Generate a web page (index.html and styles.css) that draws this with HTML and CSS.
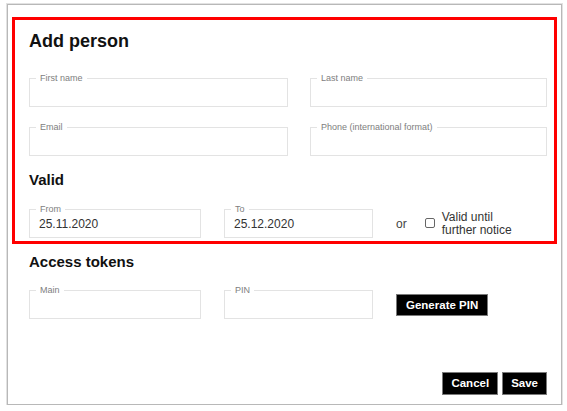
FILE: index.html
```html
<!DOCTYPE html>
<html lang="en">
<head>
<meta charset="utf-8">
<title>Add person</title>
<link rel="stylesheet" href="styles.css">
</head>
<body>
<div class="dialog">
  <section class="person">
    <h1 class="title">Add person</h1>
    <div class="row row-names">
      <fieldset class="field"><legend>First name</legend><div class="value"></div></fieldset>
      <fieldset class="field"><legend>Last name</legend><div class="value"></div></fieldset>
    </div>
    <div class="row row-names">
      <fieldset class="field"><legend>Email</legend><div class="value"></div></fieldset>
      <fieldset class="field"><legend>Phone (international format)</legend><div class="value"></div></fieldset>
    </div>
    <h2 class="subtitle">Valid</h2>
    <div class="row row-dates">
      <fieldset class="field"><legend>From</legend><div class="value">25.11.2020</div></fieldset>
      <fieldset class="field"><legend>To</legend><div class="value">25.12.2020</div></fieldset>
      <div class="options">
        <span class="or">or</span>
        <label class="check"><input type="checkbox" class="box"><span class="check-text">Valid until<br>further notice</span></label>
      </div>
    </div>
  </section>
  <section class="tokens">
    <h2 class="subtitle subtitle-tokens">Access tokens</h2>
    <div class="row row-dates row-tokens">
      <fieldset class="field"><legend>Main</legend><div class="value"></div></fieldset>
      <fieldset class="field"><legend>PIN</legend><div class="value"></div></fieldset>
      <button class="btn btn-gen" type="button">Generate PIN</button>
    </div>
  </section>
  <div class="footer">
    <button class="btn" type="button">Cancel</button>
    <button class="btn" type="button">Save</button>
  </div>
</div>
</body>
</html>
```
FILE: styles.css
```css
* { box-sizing: border-box; }
body {
  margin: 0;
  background: #fff;
  font-family: "Liberation Sans", Arial, sans-serif;
  color: #111;
}
.dialog {
  margin: 4px 0 0 7px;
  width: 555px;
  height: 401px;
  border: 1px solid #b8b8b8;
  box-shadow: 0 0 0 1px #e2e2e2;
  display: flex;
  flex-direction: column;
  padding: 12px 4px 9px 4px;
}
.person {
  border: 3px solid #f00;
  padding: 10px 6px 3px 14px;
}
.title {
  margin: 0;
  font-size: 18px;
  line-height: 22px;
  font-weight: bold;
  color: #111;
}
.row { display: grid; }
.row-names {
  grid-template-columns: 259px 237px;
  column-gap: 22px;
  margin-top: 15px;
}
.title + .row-names { margin-top: 21px; }
.subtitle {
  margin: 15px 0 0;
  font-size: 15px;
  line-height: 18px;
  font-weight: bold;
  color: #111;
}
.row-dates {
  grid-template-columns: 172px 149px auto;
  column-gap: 23px;
  margin-top: 15px;
  align-items: start;
}
.field {
  margin: 0;
  padding: 0 6px;
  border: 1px solid #e3e3e3;
  min-width: 0;
  height: 34px;
}
.field legend {
  padding: 0 4px;
  font-size: 9px;
  line-height: 10px;
  color: #7e7e7e;
}
.value {
  padding: 2px 0 0 3px;
  font-size: 12px;
  line-height: 16px;
  color: #333;
}
.options {
  display: flex;
  align-items: center;
  margin-top: 7px;
  font-size: 12px;
  color: #444;
}
.or { line-height: 14px; }
.check {
  display: flex;
  align-items: center;
  margin-left: 18px;
}
.box {
  appearance: none;
  -webkit-appearance: none;
  margin: -2px 7px 0 0;
  width: 10px;
  height: 10px;
  border: 1px solid #666;
  border-radius: 2px;
  background: #fff;
}
.check-text {
  line-height: 13px;
  color: #333;
}
.tokens {
  padding: 0 0 0 17px;
}
.subtitle-tokens { margin-top: 9px; }
.row-tokens { margin-top: 14px; }
.btn {
  background: #000;
  color: #fff;
  font-family: "Liberation Sans", Arial, sans-serif;
  font-weight: bold;
  font-size: 11.5px;
  border: 1px solid #7a7a7a;
  padding: 0 8px;
  height: 23px;
  line-height: 21px;
}
.btn-gen {
  justify-self: start;
  margin-top: 9px;
  height: 22px;
  padding: 0 9px;
}
.footer {
  margin-top: auto;
  display: flex;
  justify-content: flex-end;
  gap: 4px;
  padding-right: 10px;
}
```
